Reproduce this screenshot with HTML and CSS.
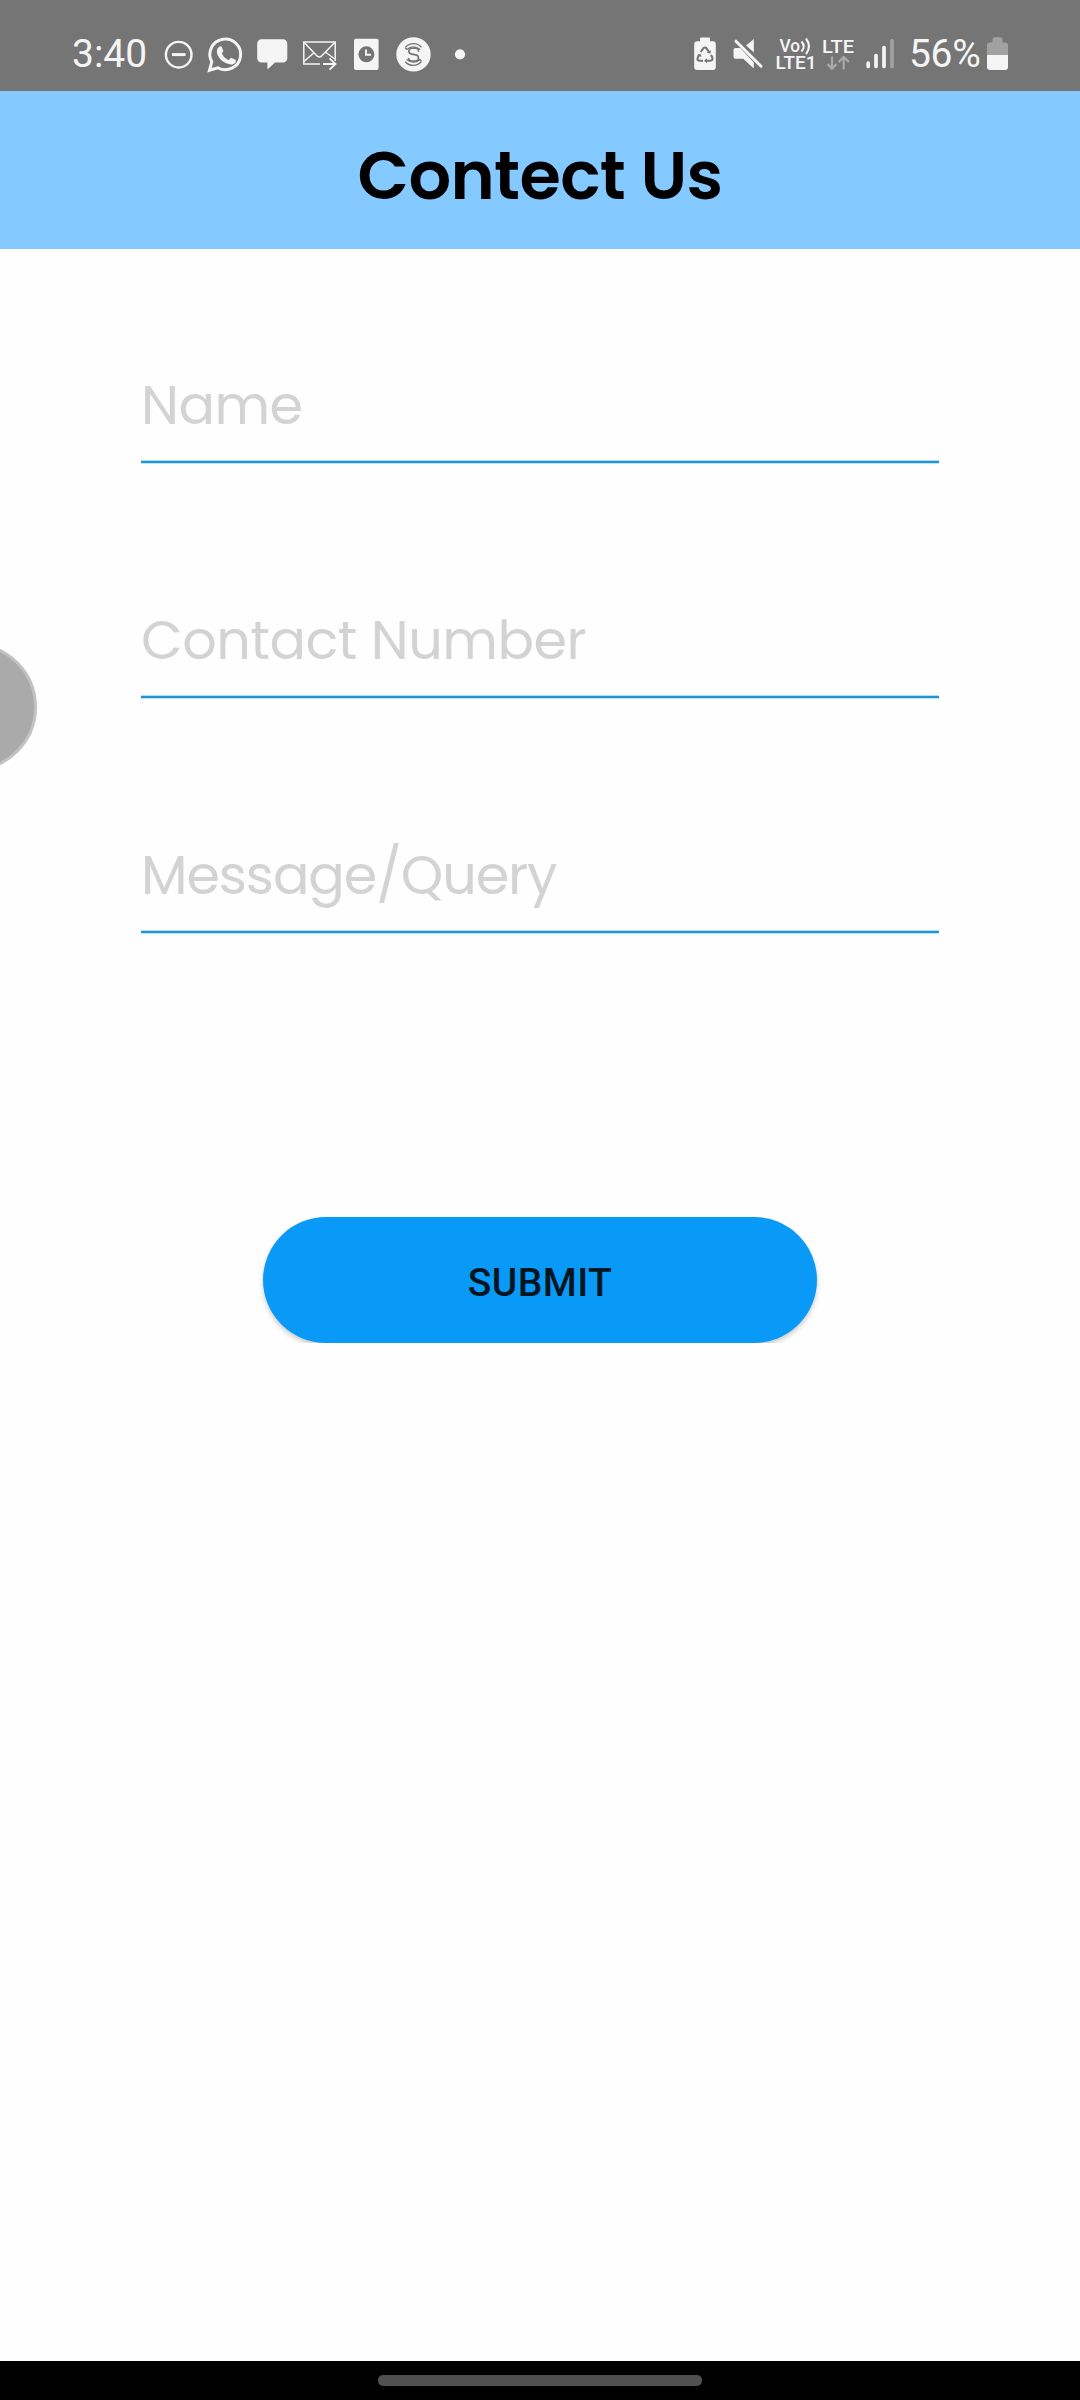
FILE: index.html
```html
<!DOCTYPE html>
<html lang="en">
<head>
<meta charset="utf-8">
<title>Contect Us</title>
<link rel="stylesheet" href="styles.css">
</head>
<body>
<div class="screen">
  <div class="status-bar">
    <div class="status-group">
      <span class="clock">3:40</span>
      <svg class="icon" width="45" height="91" viewBox="158 0 45 91"><circle cx="178.7" cy="54.7" r="12.8" fill="none" stroke="#f5f5f5" stroke-width="2.4"/><path d="M172 54.6h13.6" stroke="#f5f5f5" stroke-width="3"/></svg>
      <svg class="icon" width="47" height="91" viewBox="203 0 47 91"><path d="M209.5 70.2l2.3-8.4a15.4 15.4 0 1 1 6 6z" fill="none" stroke="#f5f5f5" stroke-width="3"/><path d="M219.2 46.8c1-.8 2.2-.7 2.7.5l1.3 3.1c.5 1.3-1.5 2.4-1.3 3.1 1.4 3 3.6 5.2 6.6 6.4 1 .3 2-2.4 3.2-2l3.7 1.8c1 .5.4 2.3-.4 3.2-2.3 2.2-5.6 1.7-8.6.4-4.4-1.8-7.3-5-9-8.9-1.100-2.900-.5-5.800 1.800-7.600z" fill="#f5f5f5"/></svg>
      <svg class="icon" width="45" height="91" viewBox="250 0 45 91"><path d="M261.5 39.3h21.5a4.3 4.3 0 0 1 4.3 4.3v14.6a4.3 4.3 0 0 1-4.3 4.3h-8l-7.6 6.9v-6.9h-5.9a4.3 4.3 0 0 1-4.3-4.3v-14.6a4.3 4.3 0 0 1 4.3-4.3z" fill="#f5f5f5"/></svg>
      <svg class="icon" width="50" height="91" viewBox="295 0 50 91"><g fill="none" stroke="#f5f5f5" stroke-width="1.5"><path d="M320 64h-16.2v-22h31.4v19"/><path d="M304 42.2l13.3 14q2 1.6 4 0l13.7-14M304 61.5l9.7-8.5M334.800 59l-9.500-7"/><path d="M323 64h12M329.500 58.300l6 5.700-6 5.700" stroke-width="1.800"/></g></svg>
      <svg class="icon" width="43" height="91" viewBox="345 0 43 91"><rect x="354" y="38.8" width="24.6" height="31.2" rx="2" fill="#f5f5f5"/><circle cx="366.4" cy="54.3" r="8" fill="#757575"/><path d="M366 49.5v5.2h5" fill="none" stroke="#f5f5f5" stroke-width="2"/></svg>
      <svg class="icon" width="52" height="91" viewBox="388 0 52 91"><circle cx="413.5" cy="54.4" r="17.2" fill="#f5f5f5"/><g fill="none" stroke="#757575" stroke-width="1.6"><path d="M418.500 51.800v-1q0-2.600-3-2.600h-3.500q-3.200 0-3.200 3 0 2.300 3 2.900l4 .8q2.700.6 2.700 3 0 3.100-3.300 3.100h-3.400q-3.300 0-3.300-3"/><path d="M405.300 48l1.600 1.300q6.500-5 13.300.300M405.300 47.500q3.400-3.900 8.200-3.900t8 3.700M421.500 61l-1.600-1.300q-6.500 5-13.300-.3M421.500 61.500q-3.400 3.900-8.200 3.900t-8-3.700" stroke-width="1.300"/></g></svg>
      <svg class="icon" width="40" height="91" viewBox="440 0 40 91"><circle cx="460" cy="54.3" r="5.1" fill="#f5f5f5"/></svg>
    </div>
    <div class="status-group">
      <svg class="icon" width="40" height="91" viewBox="685 0 40 91"><path d="M701 37.5h8a1 1 0 0 1 1 1v2.8h2.800a3 3 0 0 1 3 3v22.700a3 3 0 0 1-3 3h-15.600a3 3 0 0 1-3-3v-22.700a3 3 0 0 1 3-3h2.800v-2.800a1 1 0 0 1 1-1z" fill="#f5f5f5"/><g fill="none" stroke="#757575" stroke-width="2.1"><path d="M700.700 52l2.600-3.700q1.600-1.700 3.200 0l2.400 3.500"/><path d="M711 55l1.300 2.500q1 3-2 3.300h-4.500"/><path d="M703 60.800h-3q-3.500-.3-2.200-3.300l1.600-2.700"/></g><path d="M706.800 52.500l3.500 1.200.7-3.500zM707 58.300v5l-3-2.500zM697 55.200l3.300-1.600 1.300 3.500z" fill="#757575"/></svg>
      <svg class="icon" width="47" height="91" viewBox="725 0 47 91"><path d="M753.8 39v13.500l-7.700-7.100zM735.500 48h4.800l13.500 14.500v6l-10.500-9.700h-7.800q-2-.2-2-2v-6.800q0-1.800 2-2z" fill="#f5f5f5"/><path d="M736 41.200l25 25" stroke="#f5f5f5" stroke-width="3" stroke-linecap="round"/></svg>
      <svg class="icon" width="46" height="91" viewBox="772 0 46 91"><text class="net" x="779.5" y="52" textLength="20.5" lengthAdjust="spacingAndGlyphs">Vo</text><path d="M801.500 41.500q4.500 5 0 10M806 38.500q6 8 0 15.500" fill="none" stroke="#f5f5f5" stroke-width="2.1"/><text class="net" x="775.5" y="69" textLength="41" lengthAdjust="spacingAndGlyphs">LTE1</text></svg>
      <svg class="icon" width="42" height="91" viewBox="818 0 42 91"><text class="net" x="822" y="52.5" textLength="32" lengthAdjust="spacingAndGlyphs">LTE</text><path d="M832 56.500v12M827.500 64l4.500 4.800 4.500-4.800M843.700 69.500v-12M838.500 62l5.200-5 5.200 5" fill="none" stroke="#a9a9a9" stroke-width="2.2"/></svg>
      <svg class="icon" width="44" height="91" viewBox="860 0 44 91"><g stroke="#f5f5f5" stroke-width="3.7" stroke-linecap="round"><path d="M868.200 63v3.400M876 55.500v10.900M884 47.500v18.900"/><path d="M892 40.500v25.900" stroke="#a1a1a1"/></g></svg>
      <span class="percent">56%</span>
      <svg class="icon" width="32" height="91" viewBox="983 0 32 91"><path d="M987 55v-9.500a3 3 0 0 1 3-3h2.500v-3.300a2 2 0 0 1 2-2h6a2 2 0 0 1 2 2v3.300h2.500a3 3 0 0 1 3 3v9.500z" fill="#a1a1a1"/><path d="M987 55h21v12a3 3 0 0 1-3 3h-15a3 3 0 0 1-3-3z" fill="#f5f5f5"/></svg>
    </div>
  </div>

  <header class="app-header"><h1 class="title">Contect Us</h1></header>

  <main class="form">
    <div class="field"><span class="hint">Name</span></div>
    <div class="field"><span class="hint">Contact Number</span></div>
    <div class="field"><span class="hint hint-message">Message/Query</span></div>
    <div class="submit-wrap"><button class="submit" type="button">SUBMIT</button></div>
  </main>

  <div class="edge-handle"></div>
  <footer class="nav-bar"><div class="nav-pill"></div></footer>
</div>
</body>
</html>
```

FILE: styles.css
```css
* { box-sizing: border-box; }
body { margin: 0; background: #fefefe; }

.screen {
  position: relative;
  display: flex;
  flex-direction: column;
  width: 1080px;
  height: 2400px;
  overflow: hidden;
  background: #fefefe;
}

.status-bar {
  display: flex;
  justify-content: space-between;
  height: 91px;
  padding: 0 65px 0 72px;
  background: #757575;
  color: #f5f5f5;
  font-family: Roboto, sans-serif;
}
.status-group { display: flex; }
.icon { display: block; flex: none; }
.clock, .percent {
  flex: none;
  font-size: 39px;
  line-height: 46px;
  padding-top: 31px;
  white-space: nowrap;
}
.clock { width: 86px; }
.percent { width: 79px; padding-left: 5px; letter-spacing: -0.3px; }
.net { font: 500 18.5px Roboto, sans-serif; fill: #f5f5f5; }

.app-header {
  display: flex;
  justify-content: center;
  height: 158px;
  background: #84c9ff;
}
.title {
  margin: 0;
  padding-top: 46px;
  font: 600 67px/78px Poppins, Inter, sans-serif;
  letter-spacing: -0.65px;
  color: #000;
  white-space: nowrap;
}

.form {
  flex: 1;
  display: flex;
  flex-direction: column;
  padding: 114px 141px 0;
}
.field {
  height: 101px;
  margin-bottom: 134px;
  border-bottom: 4px solid transparent;
  background: linear-gradient(#a9e0fa 0 1px, #2590d3 1px 3px, #b5e9fb 3px 4px) 0 100% / 100% 4px no-repeat border-box;
}
.hint {
  display: block;
  padding-top: 10px;
  font: 400 54px/64px Poppins, Inter, sans-serif;
  letter-spacing: -0.5px;
  color: #d3d3d3;
  white-space: nowrap;
}
.hint-message { letter-spacing: -1.1px; }

.submit-wrap {
  align-self: center;
  width: 570px;
  height: 134px;
  margin-top: 141px;
  padding: 8px 8px 0;
  overflow: hidden;
}
.submit {
  display: block;
  width: 554px;
  height: 126px;
  padding: 5px 0 0;
  border: 0;
  border-radius: 63px;
  background: #089af6;
  box-shadow: 0 3px 5px rgba(0, 0, 0, 0.2);
  color: #04151f;
  font: 500 39px/46px Roboto, sans-serif;
  letter-spacing: 0.4px;
}

.edge-handle {
  position: absolute;
  left: -91px;
  top: 643px;
  width: 128px;
  height: 128px;
  border: 3px solid #c2c2c2;
  border-radius: 50%;
  background: #aaa;
}

.nav-bar {
  display: flex;
  justify-content: center;
  height: 39px;
  padding-top: 14px;
  background: #000;
}
.nav-pill { width: 324px; height: 11px; border-radius: 5px; background: #505050; }
```
